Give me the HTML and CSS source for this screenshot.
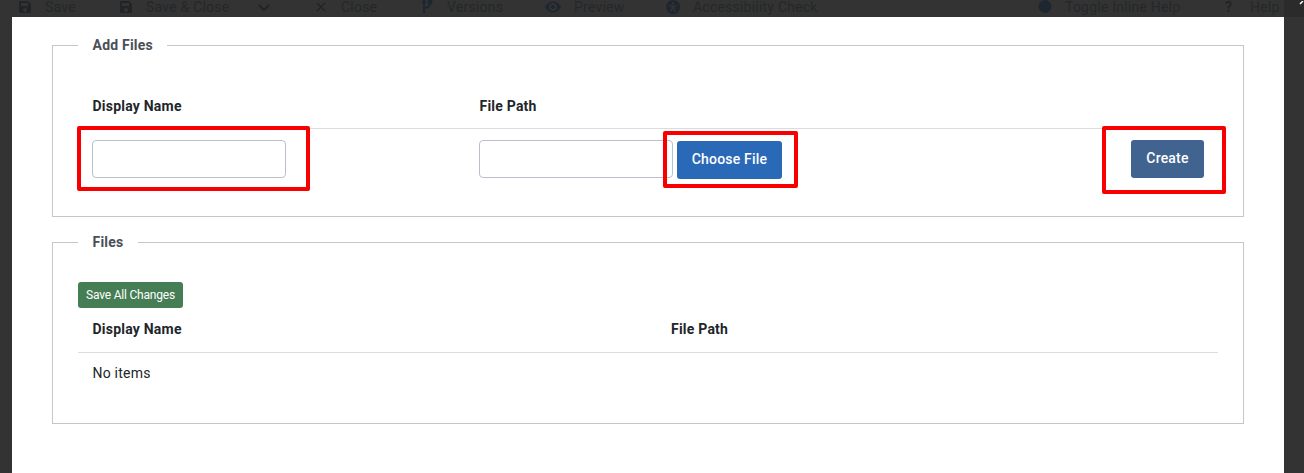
FILE: index.html
```html
<!DOCTYPE html>
<html lang="en">
<head>
<meta charset="utf-8">
<title>Add Files</title>
<link rel="stylesheet" href="styles.css">
</head>
<body>
<header class="toolbar">
  <div class="tool save"><svg viewBox="0 0 14 14"><path fill-rule="evenodd" d="M2 1h8l3 3v8q0 1-1 1H2q-1 0-1-1V2q0-1 1-1zM3 3v3h7V3zM7 8a2 2 0 1 0 .1 0z"/></svg><span>Save</span></div>
  <div class="tool save-close"><svg viewBox="0 0 14 14"><path fill-rule="evenodd" d="M2 1h8l3 3v8q0 1-1 1H2q-1 0-1-1V2q0-1 1-1zM3 3v3h7V3zM7 8a2 2 0 1 0 .1 0z"/></svg><span>Save &amp; Close</span></div>
  <div class="tool more"><svg viewBox="0 0 14 14"><path class="line" d="M2 5l5 5 5-5"/></svg></div>
  <div class="tool close"><svg viewBox="0 0 14 14"><path class="line thin" d="M3 3l8 8M11 3L3 11"/></svg><span>Close</span></div>
  <div class="tool versions blue"><svg viewBox="0 0 14 14"><path class="line" d="M4 13V1M4 8q6 0 6-6"/><circle cx="4" cy="2" r="2"/><circle cx="10" cy="2" r="2.500"/></svg><span>Versions</span></div>
  <div class="tool preview blue"><svg viewBox="0 0 16 14"><path fill-rule="evenodd" d="M0 7q3-5.500 8-5.500T16 7q-3 5.500-8 5.500T0 7zM8 3a4 4 0 1 0 .1 0zM8 5a2 2 0 1 1-.1 0z"/></svg><span>Preview</span></div>
  <div class="tool access blue"><svg viewBox="0 0 14 14"><path fill-rule="evenodd" d="M7 0a7 7 0 1 0 .1 0zM7 2a1.200 1.200 0 1 1-.1 0zM3 5l3 .6h2L11 5v1l-2.500.7.200 2L10 12H9L7 9l-2 3H4l1.300-3.300.200-2L3 6z"/></svg><span>Accessibility Check</span></div>
  <div class="tool inline-help blue"><svg viewBox="0 0 14 14"><circle cx="7" cy="6.500" r="6.500"/></svg><span>Toggle Inline Help</span></div>
  <div class="tool help"><b>?</b><span>Help</span></div>
  <div class="edge"><svg viewBox="0 0 5 4"><path d="M1 3L4 0" stroke="#fff" stroke-width="1.500"/></svg></div>
</header>
<main class="modal">
  <fieldset class="panel add-panel">
    <legend>Add Files</legend>
    <div class="row head add-grid"><div>Display Name</div><div>File Path</div></div>
    <div class="row add-grid fields">
      <div class="cell"><input class="field" type="text" aria-label="Display Name"><i class="mark mark-name"></i></div>
      <div class="cell"><input class="field" type="text" aria-label="File Path"><span class="holder"><button class="btn choose">Choose File</button><i class="mark mark-choose"></i></span></div>
      <div class="cell last"><span class="holder"><button class="btn create">Create</button><i class="mark mark-create"></i></span></div>
    </div>
  </fieldset>
  <fieldset class="panel files-panel">
    <legend>Files</legend>
    <button class="btn save-all">Save All Changes</button>
    <div class="row head files-grid"><div>Display Name</div><div>File Path</div></div>
    <div class="row empty">No items</div>
  </fieldset>
</main>
</body>
</html>
```
FILE: styles.css
```css
* { box-sizing: border-box; }
body {
  margin: 0;
  height: 473px;
  overflow: hidden;
  background: #333;
  color: #22262a;
  font: 14px/21px Roboto, sans-serif;
  letter-spacing: .22px;
}
.toolbar {
  display: flex;
  height: 17px;
  padding-left: 18px;
  overflow: hidden;
  color: #222527;
}
.tool { display: flex; flex: none; height: 14px; line-height: 14px; white-space: nowrap; }
.tool svg { width: 14px; height: 14px; flex: none; fill: currentColor; }
.tool span { margin-left: 13px; color: #25282a; }
.tool .line { fill: none; stroke: currentColor; stroke-width: 2; }
.tool .thin { stroke-width: 1.500; }
.blue svg { color: #1e2730; }
.save { width: 101px; }
.save-close { width: 138px; }
.more { width: 57px; }
.close { width: 106px; }
.versions { width: 125px; }
.preview { width: 121px; }
.preview svg { width: 16px; }
.access { width: 372px; }
.inline-help { width: 187px; }
.help b { width: 12px; }
.edge { flex: none; width: 20px; height: 17px; margin-left: auto; background: #2b2b2b; text-align: right; line-height: 0; }
.edge svg { width: 5px; height: 4px; }
.modal {
  width: 1272px;
  height: 456px;
  margin-left: 12px;
  padding: 18px 40px;
  background: #fff;
}
.panel {
  min-width: 0;
  margin: 0 0 15px;
  padding: 0 25px;
  border: 1px solid #c3c6ca;
}
.add-panel { height: 182px; }
.files-panel { height: 192px; }
legend { padding: 0 14.500px; height: 21px; color: #495057; font-weight: 700; }
.row { width: 1140px; }
.head {
  height: 34px;
  border-bottom: 1px solid #dadcde;
  font-weight: 700;
}
.head > div, .empty { padding-left: 14.500px; }
.add-grid { display: grid; grid-template-columns: 387px 420px 1fr; }
.files-grid { display: grid; grid-template-columns: 578.500px 1fr; margin-top: 11px; }
.add-panel .head { height: 33px; margin-top: 40px; }
.fields { padding-top: 11px; }
.cell { position: relative; display: flex; gap: 4px; padding-left: 14px; }
.last { justify-content: flex-end; padding-right: 14px; }
.field {
  width: 194px;
  height: 38px;
  border: 1px solid #bac0cb;
  border-radius: 4px;
  background: #fff;
}
.holder { position: relative; }
.btn {
  display: block;
  padding: 0;
  border: 0;
  border-radius: 3px;
  color: #fff;
  font: 500 14px/21px Roboto, sans-serif;
  letter-spacing: .2px;
}
.choose { width: 105px; height: 38px; margin-top: 1px; padding-bottom: 2px; background: #2a69b8; }
.create { width: 73px; height: 38px; padding-bottom: 2px; background: #40638f; }
.save-all { width: 105px; height: 26px; margin-top: 29px; background: #457d54; font-size: 12px; font-weight: 400; letter-spacing: -.2px; }
.empty { padding-top: 10px; }
.mark { position: absolute; border: 4px solid #f80000; border-radius: 2px; }
.mark-name { left: -1px; top: -14px; width: 233px; height: 65px; }
.mark-choose { left: -14px; top: -9px; width: 135px; height: 57px; }
.mark-create { left: -29px; top: -14px; width: 124px; height: 68px; }
```
